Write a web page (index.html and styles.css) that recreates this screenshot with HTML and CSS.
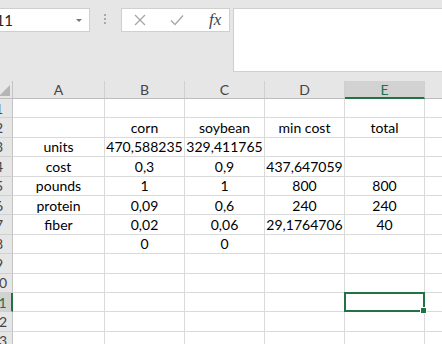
FILE: index.html
```html
<!DOCTYPE html>
<html lang="en">
<head>
  <meta charset="UTF-8" />
  <title>Sheet</title>
  <link rel="stylesheet" href="styles.css">
</head>
<body>

  <div class="toolbar">
    <div class="name-box">
      <span>E11</span>
      <span class="drop"></span>
    </div>
    <div class="grip"><i></i><i></i><i></i></div>
    <div class="fx-buttons">
      <svg width="14" height="14" viewBox="0 0 14 14"><path d="M2 2L12 12M12 2L2 12" stroke="#a6a6a6" stroke-width="1.3" fill="none"/></svg>
      <svg width="16" height="14" viewBox="0 0 16 14"><path d="M2 7.5L6 11.5L14 2.5" stroke="#a6a6a6" stroke-width="1.3" fill="none"/></svg>
      <span class="fx">fx</span>
    </div>
    <div class="formula"></div>
  </div>

  <div class="sheet">
    <div class="corner"></div>
    <div class="col-head">A</div>
    <div class="col-head">B</div>
    <div class="col-head">C</div>
    <div class="col-head">D</div>
    <div class="col-head selected">E</div>
    <div class="col-head last"></div>

    <div class="row-head">1</div>
    <div></div><div></div><div></div><div></div><div></div><div></div>

    <div class="row-head">2</div>
    <div></div><div>corn</div><div>soybean</div><div>min cost</div><div>total</div><div></div>

    <div class="row-head">3</div>
    <div>units</div><div>470,588235</div><div>329,411765</div><div></div><div></div><div></div>

    <div class="row-head">4</div>
    <div>cost</div><div>0,3</div><div>0,9</div><div>437,647059</div><div></div><div></div>

    <div class="row-head">5</div>
    <div>pounds</div><div>1</div><div>1</div><div>800</div><div>800</div><div></div>

    <div class="row-head">6</div>
    <div>protein</div><div>0,09</div><div>0,6</div><div>240</div><div>240</div><div></div>

    <div class="row-head">7</div>
    <div>fiber</div><div>0,02</div><div>0,06</div><div>29,1764706</div><div>40</div><div></div>

    <div class="row-head">8</div>
    <div></div><div>0</div><div>0</div><div></div><div></div><div></div>

    <div class="row-head">9</div>
    <div></div><div></div><div></div><div></div><div></div><div></div>

    <div class="row-head">10</div>
    <div></div><div></div><div></div><div></div><div></div><div></div>

    <div class="row-head selected">11</div>
    <div></div><div></div><div></div><div></div><div class="active"></div><div></div>

    <div class="row-head">12</div>
    <div></div><div></div><div></div><div></div><div></div><div></div>

    <div class="row-head">13</div>
    <div></div><div></div><div></div><div></div><div></div><div></div>
  </div>

</body>
</html>
```

FILE: styles.css
```css
body {
  margin: 0;
  width: 442px;
  height: 344px;
  overflow: hidden;
  background-color: #fff;
  font-family: Lato, "Liberation Sans", sans-serif;
  font-size: 14px;
  color: #000;
}

.toolbar {
  display: flex;
  align-items: flex-start;
  height: 81px;
  padding-top: 8px;
  box-sizing: border-box;
  background-color: #e6e6e6;
}
.name-box {
  display: flex;
  align-items: center;
  justify-content: space-between;
  width: 109px;
  height: 24px;
  margin-left: -19px;
  padding: 0 7px 0 5px;
  box-sizing: border-box;
  background-color: #fff;
  border: 1px solid #cfcfcf;
  font-size: 15px;
  color: #222;
}
.drop {
  width: 0;
  height: 0;
  border-left: 3px solid transparent;
  border-right: 3px solid transparent;
  border-top: 3px solid #777;
}
.grip {
  display: flex;
  flex-direction: column;
  gap: 2px;
  margin: 6px 0 0 14px;
}
.grip i {
  width: 2px;
  height: 2px;
  background-color: #a8a8a8;
}
.fx-buttons {
  display: flex;
  align-items: center;
  gap: 22px;
  width: 109px;
  height: 24px;
  margin-left: 15px;
  padding-left: 11px;
  box-sizing: border-box;
  background-color: #fff;
  border: 1px solid #cfcfcf;
}
.fx {
  margin-left: 2px;
  font-family: "Liberation Serif", serif;
  font-style: italic;
  font-size: 17px;
  color: #444;
}
.formula {
  flex: 1;
  height: 62px;
  margin-left: 3px;
  background-color: #fff;
  border: 1px solid #cfcfcf;
  border-right: none;
}

.sheet {
  display: grid;
  grid-template-columns: 27px 92px 80px 80px 80px 80px 80px;
  grid-template-rows: 18px;
  grid-auto-rows: 19.4px;
  margin-left: -14px;
}
.sheet > div {
  box-sizing: border-box;
  border-right: 1px solid #dadada;
  border-bottom: 1px solid #dadada;
  display: flex;
  align-items: center;
  justify-content: center;
  white-space: nowrap;
  line-height: 1;
  padding-top: 1px;
}
.sheet > .corner {
  position: relative;
  background-color: #e6e6e6;
  border-right: 1px solid #c4c4c4;
  border-bottom: 1px solid #bdbdbd;
}
.corner::after {
  content: "";
  position: absolute;
  right: 2px;
  bottom: 2px;
  width: 11px;
  height: 11px;
  background-color: #b5b5b5;
  clip-path: polygon(100% 0, 100% 100%, 0 100%);
}
.sheet > .col-head {
  background-color: #e6e6e6;
  border-right: 1px solid #d0d0d0;
  border-bottom: 1px solid #bdbdbd;
  color: #444;
}
.sheet > .col-head.selected {
  background-color: #d2d2d2;
  border-bottom: 2px solid #217346;
  color: #217346;
}
.sheet > .col-head.last {
  border-right: none;
}
.sheet > .row-head {
  background-color: #e6e6e6;
  border-right: 1px solid #c4c4c4;
  border-bottom: 1px solid #d0d0d0;
  color: #444;
}
.sheet > .row-head.selected {
  background-color: #d2d2d2;
  border-right: 2px solid #217346;
  color: #217346;
}
.sheet > .active {
  position: relative;
}
.active::before {
  content: "";
  position: absolute;
  top: -1px;
  left: -1px;
  right: -1px;
  bottom: -1px;
  border: 2px solid #217346;
}
.active::after {
  content: "";
  position: absolute;
  right: -3px;
  bottom: -3px;
  width: 5px;
  height: 5px;
  background-color: #217346;
  border: 1px solid #fff;
}
```
